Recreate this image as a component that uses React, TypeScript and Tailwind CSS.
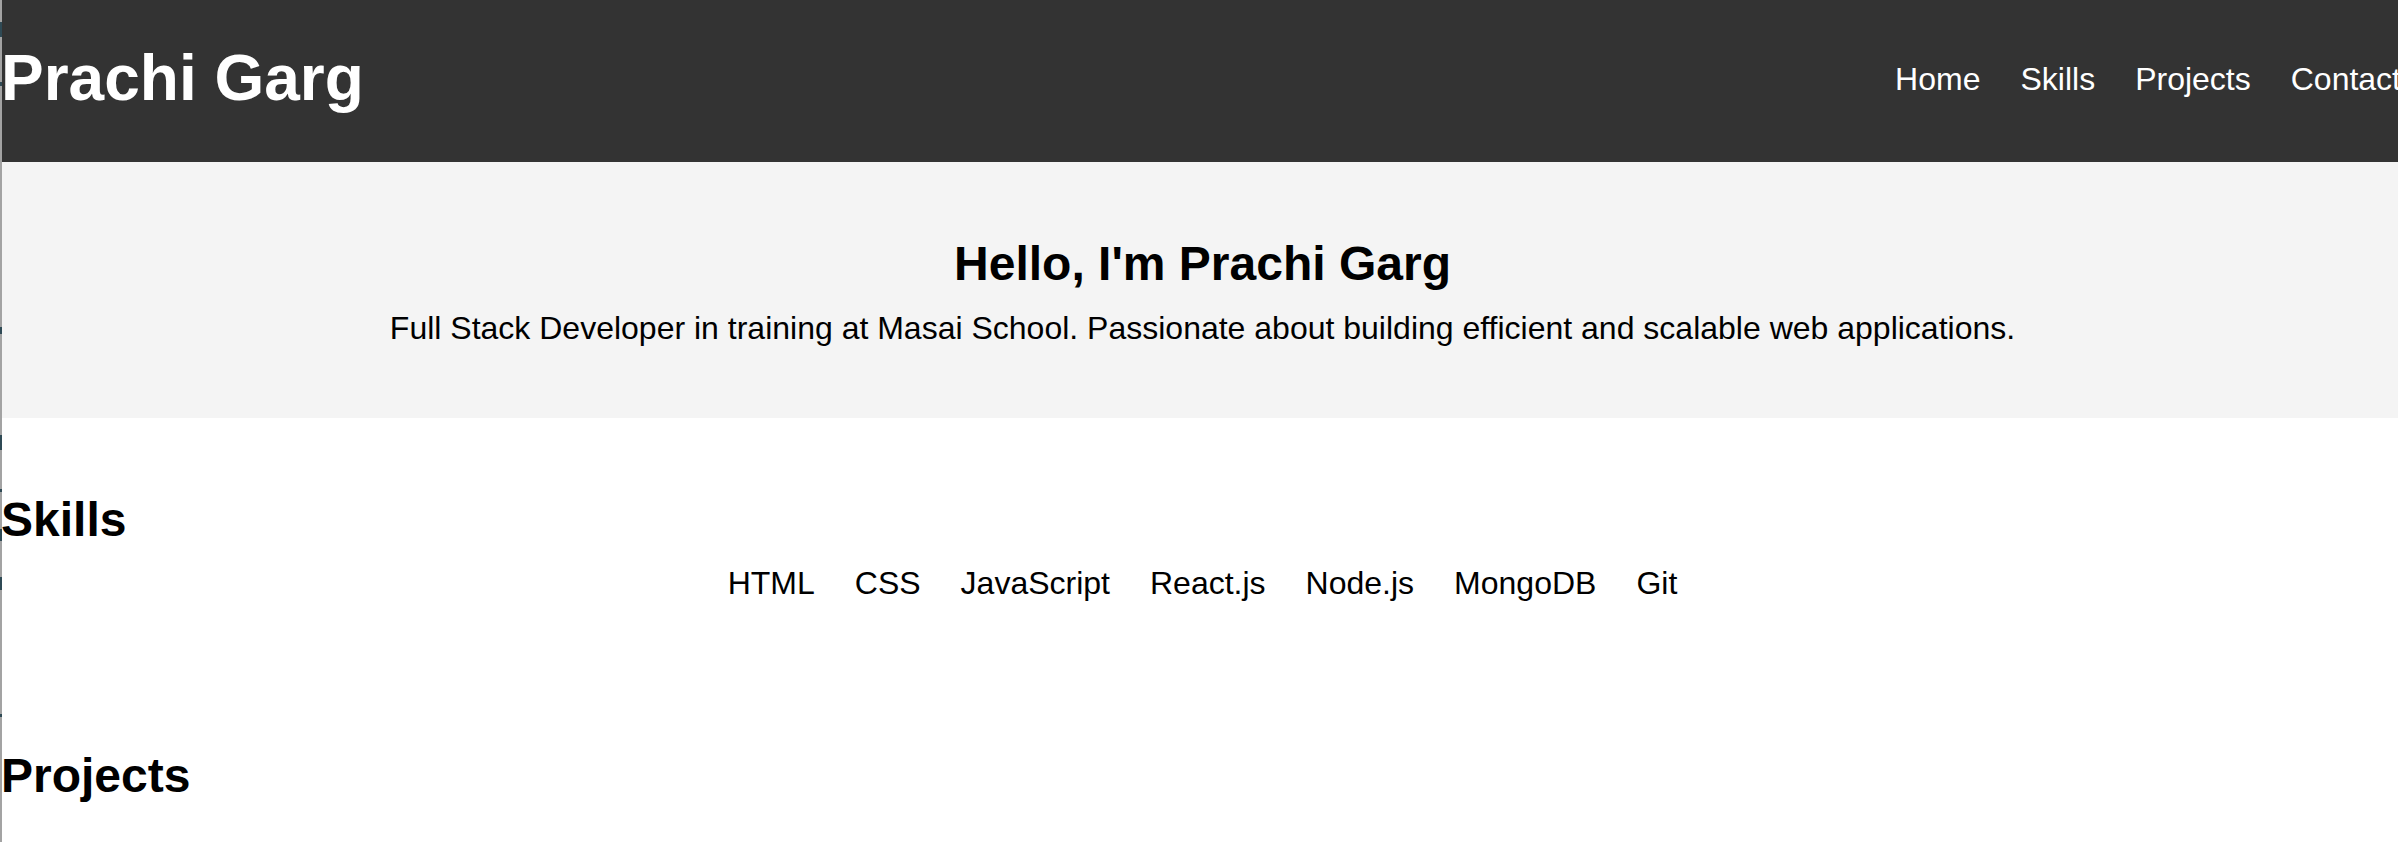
import React from "react";

const marks = [
  { top: 22, h: 15 },
  { top: 82, h: 4 },
  { top: 327, h: 7 },
  { top: 435, h: 15 },
  { top: 489, h: 3 },
  { top: 529, h: 12 },
  { top: 577, h: 13 },
  { top: 714, h: 3 },
];

export default function App() {
  return (
    <div
      className="relative w-full h-[842px] overflow-hidden bg-white text-black"
      style={{ fontFamily: '"Liberation Sans", Arial, Helvetica, sans-serif' }}
    >
      <div className="w-[2404px] pl-[1px]">
        <header className="flex justify-between items-start h-[162px] bg-[#333333] text-white">
          <h1 className="mt-[46px] text-[64px] leading-[64px] font-bold">Prachi Garg</h1>
          <nav className="mt-[63px] mr-[3px] flex gap-[40px] text-[32px] leading-[32px]">
            <a>Home</a>
            <a>Skills</a>
            <a>Projects</a>
            <a>Contact</a>
          </nav>
        </header>

        <section className="flex flex-col items-center h-[256px] bg-[#f4f4f4] text-center">
          <h2 className="mt-[78px] text-[48px] leading-[48px] font-bold">Hello, I'm Prachi Garg</h2>
          <p className="mt-[24px] text-[32px] leading-[32px]">
            Full Stack Developer in training at Masai School. Passionate about building efficient and scalable web applications.
          </p>
        </section>

        <section className="flex flex-col">
          <h2 className="mt-[78px] text-[48px] leading-[48px] font-bold">Skills</h2>
          <ul className="mt-[23px] flex justify-center gap-[40px] text-[32px] leading-[32px]">
            <li>HTML</li>
            <li>CSS</li>
            <li>JavaScript</li>
            <li>React.js</li>
            <li>Node.js</li>
            <li>MongoDB</li>
            <li>Git</li>
          </ul>
        </section>

        <section className="flex flex-col">
          <h2 className="mt-[153px] text-[48px] leading-[48px] font-bold">Projects</h2>
        </section>
      </div>

      <div className="absolute left-0 top-0 h-full w-[2px] bg-[#a3a3a3]" />
      {marks.map((m, i) => (
        <span
          key={i}
          className="absolute left-0 w-[2px] bg-[#2f4a55]"
          style={{ top: m.top, height: m.h }}
        />
      ))}
    </div>
  );
}
